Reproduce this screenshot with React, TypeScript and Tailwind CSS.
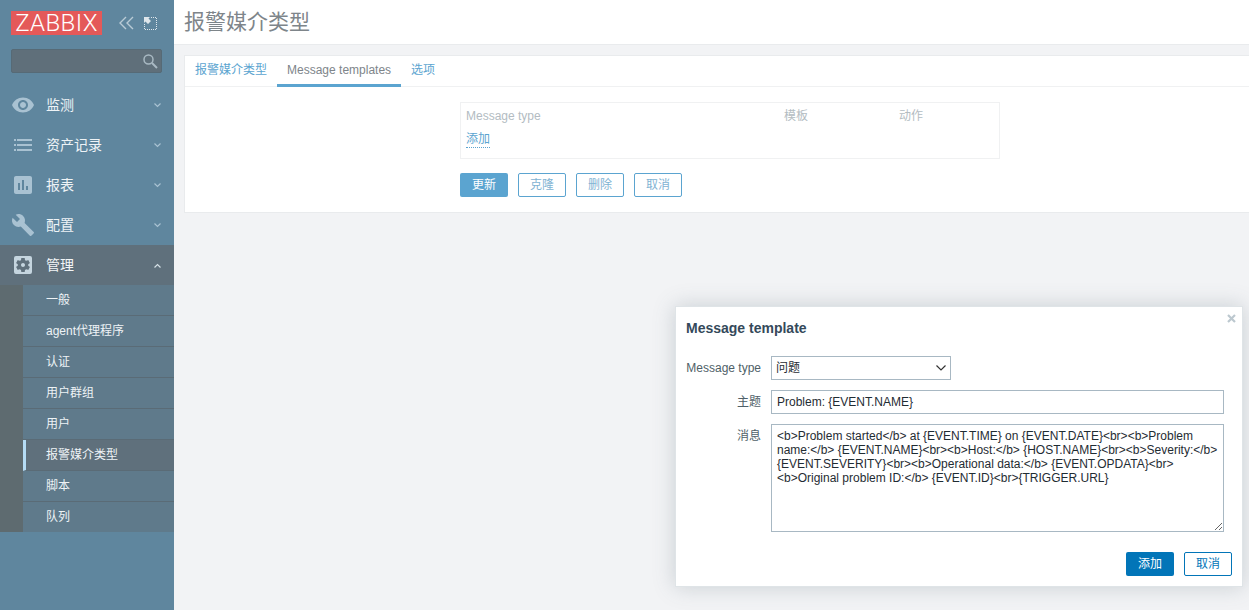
import React from 'react';
import { MdVisibility, MdAssessment, MdBuild, MdSettingsApplications } from 'react-icons/md';

const ListIcon: React.FC = () => (
  <svg width="24" height="24" viewBox="0 0 24 24" fill="currentColor">
    <rect x="3" y="6" width="2" height="2" />
    <rect x="6" y="6" width="15" height="2" />
    <rect x="3" y="11" width="2" height="2" />
    <rect x="6" y="11" width="15" height="2" />
    <rect x="3" y="16" width="2" height="2" />
    <rect x="6" y="16" width="15" height="2" />
  </svg>
);

const Chevron: React.FC<{ up?: boolean }> = ({ up }) => (
  <svg width="7" height="5" viewBox="0 0 7 5" fill="none" stroke={up ? '#d5e0e6' : '#a9c2d2'} strokeWidth="1.200">
    <path d={up ? 'M.5 4.500l3-3 3 3' : 'M.5 .5l3 3 3-3'} />
  </svg>
);

const menu = [
  { label: '监测', icon: <MdVisibility size={24} /> },
  { label: '资产记录', icon: <ListIcon /> },
  { label: '报表', icon: <MdAssessment size={24} /> },
  { label: '配置', icon: <MdBuild size={24} /> },
];

const subItems = ['一般', 'agent代理程序', '认证', '用户群组', '用户', '报警媒介类型', '脚本', '队列'];

const Sidebar: React.FC = () => (
  <aside className="w-[174px] shrink-0 bg-[#5f869e] h-[610px]">
    <div className="flex items-center pl-[11px] pt-[11px]">
      <div className="w-[91px] h-[24px] bg-[#e45959] text-white text-[24px] leading-[24px] text-center tracking-[0.4px] font-light font-['Roboto',sans-serif]">
        ZABBIX
      </div>
      <svg className="ml-[17px]" width="15" height="14" viewBox="0 0 15 14" fill="none" stroke="#b9cbd6" strokeWidth="1.400">
        <path d="M7 1L1 7l6 6M14 1L8 7l6 6" />
      </svg>
      <svg className="ml-[10px]" width="13" height="13" viewBox="0 0 13 13" fill="none">
        <path d="M0 0h6L4.500 1.500 7 4 4 7 1.500 4.500 0 6z" fill="#dfe7ec" />
        <path d="M7 .5h5.500V12.500H.5V7" stroke="#dfe7ec" strokeDasharray="1 1" />
      </svg>
    </div>
    <div className="mx-[11px] mt-[14px] h-[24px] w-[151px] rounded-[2px] border border-[#566a76] bg-[#5f6f7a] flex items-center justify-end pr-[3px]">
      <svg width="16" height="16" viewBox="0 0 16 16" fill="none" stroke="#a9b9c3" strokeWidth="1.500">
        <circle cx="6.500" cy="6.500" r="4.500" />
        <path d="M10 10l5 5" strokeWidth="2" />
      </svg>
    </div>
    <nav className="mt-[12px]">
      {menu.map((m) => (
        <div key={m.label} className="h-[40px] flex items-center pl-[11px] text-[#a9c2d2]">
          <span className="w-[24px] h-[24px] flex items-center justify-center">{m.icon}</span>
          <span className="ml-[11px] flex-1 text-[14px] text-[#eef3f6]">{m.label}</span>
          <span className="mr-[13px] flex"><Chevron /></span>
        </div>
      ))}
      <div className="h-[40px] flex items-center pl-[11px] bg-[#5f707c] text-[#c5d5df]">
        <span className="w-[24px] h-[24px] flex items-center justify-center"><MdSettingsApplications size={24} /></span>
        <span className="ml-[11px] flex-1 text-[14px] text-[#f2f5f7]">管理</span>
        <span className="mr-[13px] flex"><Chevron up /></span>
      </div>
      <div className="flex bg-[#5e6b70]">
        <div className="w-[23px] shrink-0" />
        <ul className="flex-1 bg-[#5f7a8b]">
          {subItems.map((s, i) => (
            <li
              key={s}
              className={`flex items-center text-[12px] text-[#eef3f6] ${i < subItems.length - 1 ? 'h-[31px] border-b border-[#5a6b76]' : 'h-[30px]'} ${s === '报警媒介类型' ? 'border-l-[3px] border-l-[#b5dcf5] bg-[#5f707c] pl-[20px]' : 'pl-[23px]'}`}
            >
              {s}
            </li>
          ))}
        </ul>
      </div>
    </nav>
  </aside>
);

const OutlineButton: React.FC<{ label: string; dim?: boolean }> = ({ label, dim }) => (
  <button className={`w-[48px] h-[24px] rounded-[2px] border bg-white text-[12px] ${dim ? 'border-[#5ba4d0] text-[#7fb3d3]' : 'border-[#0275b8] text-[#0275b8]'}`}>
    {label}
  </button>
);

const Main: React.FC = () => (
  <main className="flex-1 min-w-0 bg-[#f2f3f5] h-[610px]">
    <header className="h-[45px] bg-white border-b border-[#e9ebed] pl-[10px] pt-[8px] text-[21px] leading-[28px] text-[#7e858a]">
      报警媒介类型
    </header>
    <section className="mt-[10px] ml-[10px] h-[158px] bg-white border border-[#e9ebed] border-r-0">
      <div className="h-[31px] border-b border-[#f0f1f2] flex text-[12px]">
        <span className="px-[10px] leading-[29px] text-[#5ba4d0]">报警媒介类型</span>
        <span className="px-[10px] leading-[29px] text-[#7e858a] border-b-[3px] border-[#5ba4d0] h-[31px]">Message templates</span>
        <span className="px-[10px] leading-[29px] text-[#5ba4d0]">选项</span>
      </div>
      <div className="pl-[275px] pt-[15px]">
        <div className="w-[540px] h-[57px] border border-[#f0f1f2] pl-[5px] text-[12px]">
          <div className="flex h-[26px] items-center text-[#b3bcc2]">
            <span className="w-[318px]">Message type</span>
            <span className="w-[115px]">模板</span>
            <span>动作</span>
          </div>
          <span className="text-[#5ba4d0] border-b border-dotted border-[#5ba4d0] leading-[15px] inline-block mt-[3px]">添加</span>
        </div>
        <div className="flex gap-[10px] mt-[14px]">
          <button className="w-[48px] h-[24px] rounded-[2px] bg-[#5ba4d0] text-white text-[12px]">更新</button>
          <OutlineButton label="克隆" dim />
          <OutlineButton label="删除" dim />
          <OutlineButton label="取消" dim />
        </div>
      </div>
    </section>
  </main>
);

const messageText =
  '<b>Problem started</b> at {EVENT.TIME} on {EVENT.DATE}<br><b>Problem name:</b> {EVENT.NAME}<br><b>Host:</b> {HOST.NAME}<br><b>Severity:</b> {EVENT.SEVERITY}<br><b>Operational data:</b> {EVENT.OPDATA}<br><b>Original problem ID:</b> {EVENT.ID}<br>{TRIGGER.URL}';

const Modal: React.FC = () => (
  <div className="absolute left-[675px] top-[306px] w-[568px] h-[281px] bg-white border border-[#dfe4e7] shadow-[0_0_20px_rgba(80,100,110,0.25)] text-[12px] text-[#1f2c33]">
    <button className="absolute right-[6px] top-[7px] text-[#bcc8cf]">
      <svg className="block" width="9" height="9" viewBox="0 0 9 9" stroke="currentColor" strokeWidth="2.200">
        <path d="M1 1l7 7M8 1l-7 7" />
      </svg>
    </button>
    <h4 className="pl-[10px] pt-[13px] text-[14px] leading-[16px] font-bold text-[#34495a]">Message template</h4>
    <div className="grid grid-cols-[85px_453px] gap-x-[10px] gap-y-[10px] mt-[20px]">
      <label className="h-[24px] leading-[24px] text-right text-[#4f5f68]">Message type</label>
      <div className="w-[180px] h-[24px] border border-[#a8b8c3] flex items-center justify-between pl-[4px] pr-[4px]">
        <span>问题</span>
        <svg width="10" height="6" viewBox="0 0 10 6" fill="none" stroke="#333" strokeWidth="1.200">
          <path d="M0.500 0.500L5 5l4.500-4.500" />
        </svg>
      </div>
      <label className="h-[24px] leading-[24px] text-right text-[#4f5f68]">主题</label>
      <input
        readOnly
        value="Problem: {EVENT.NAME}"
        className="w-[453px] h-[24px] border border-[#a8b8c3] px-[5px] text-[12px] text-[#1f2c33] outline-none"
      />
      <label className="leading-[24px] text-right text-[#4f5f68]">消息</label>
      <textarea
        readOnly
        value={messageText}
        className="block w-[453px] h-[108px] border border-[#a8b8c3] px-[5px] py-[4px] text-[12px] leading-[14px] text-[#1f2c33] outline-none"
      />
    </div>
    <div className="absolute right-[10px] bottom-[10px] flex gap-[10px]">
      <button className="w-[48px] h-[24px] rounded-[2px] bg-[#0275b8] text-white text-[12px]">添加</button>
      <OutlineButton label="取消" />
    </div>
  </div>
);

export default function App() {
  return (
    <div className="relative flex w-[1249px] h-[610px] overflow-hidden font-['Liberation_Sans','Noto_Sans_CJK_SC',sans-serif]">
      <Sidebar />
      <Main />
      <Modal />
    </div>
  );
}
